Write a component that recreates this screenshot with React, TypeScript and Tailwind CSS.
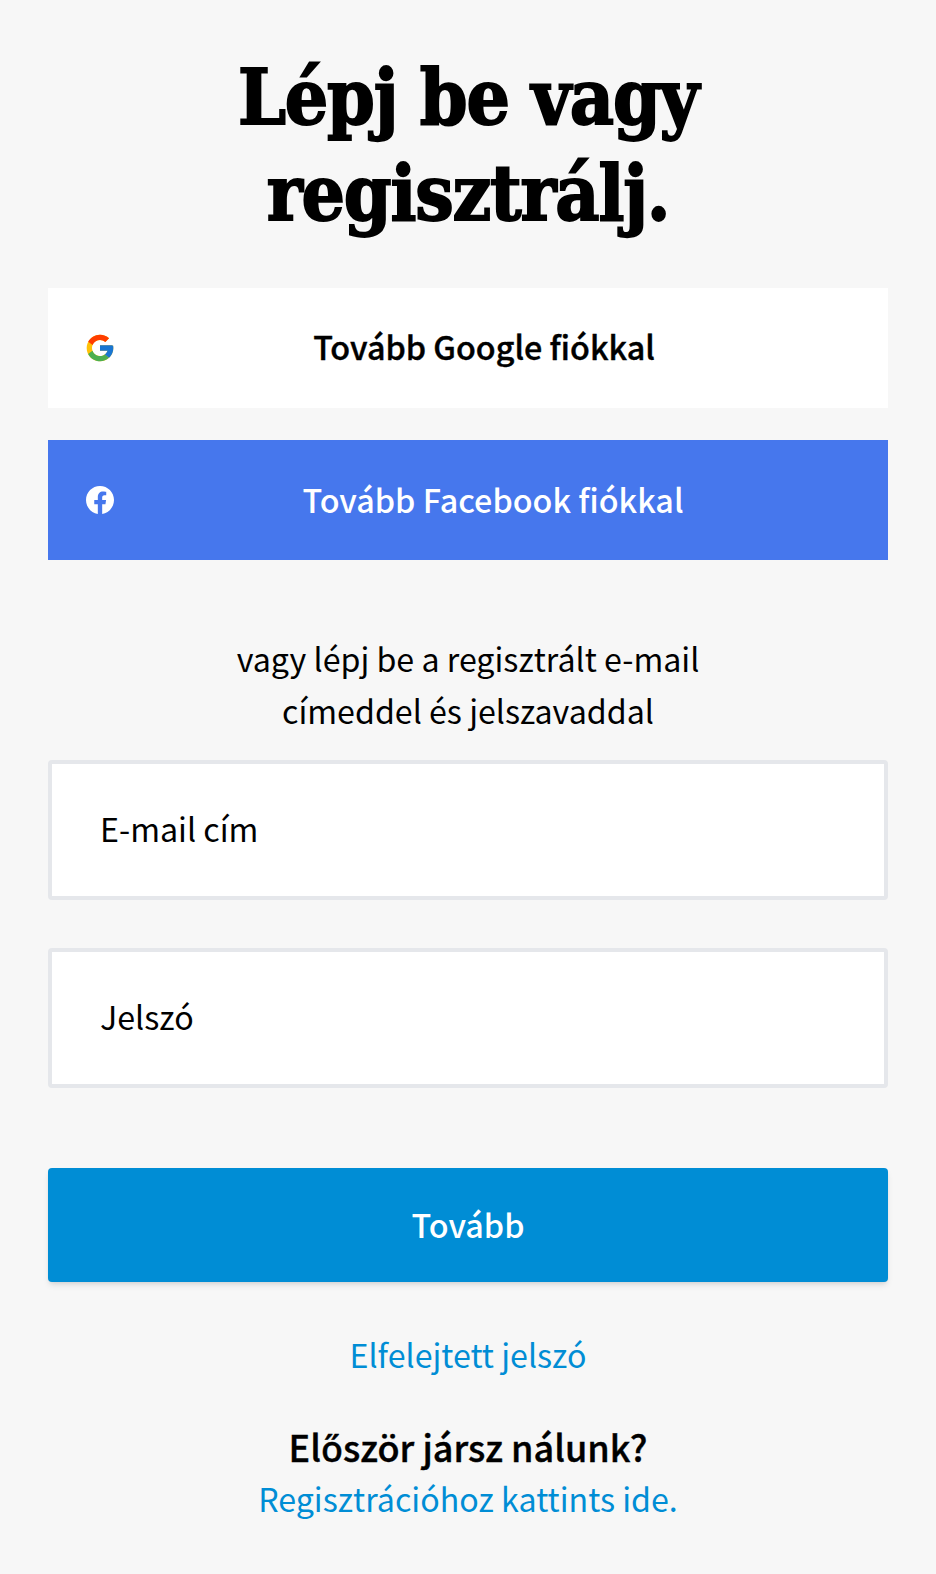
const sans = "font-['Noto_Sans_CJK_JP','Noto_Sans',sans-serif]";
export default function App() {
  return (
    <div className={`min-h-[1574px] bg-[#f7f7f7] px-12 pt-[50px] text-black ${sans}`}>
      <h1 className="text-center font-['DejaVu_Serif_Condensed','DejaVu_Serif',serif] text-[76px] leading-[96px] font-bold tracking-[-1.2px] [-webkit-text-stroke:1.8px_black]">Lépj be vagy<br />regisztrálj.</h1>
      <div className="mt-[46px] flex h-[120px] items-center bg-white pl-[36px]">
        <svg width="32" height="32" viewBox="0 0 48 48"><path fill="#FFC107" d="M43.611,20.083H42V20H24v8h11.303c-1.649,4.657-6.08,8-11.303,8c-6.627,0-12-5.373-12-12c0-6.627,5.373-12,12-12c3.059,0,5.842,1.154,7.961,3.039l5.657-5.657C34.046,6.053,29.268,4,24,4C12.955,4,4,12.955,4,24c0,11.045,8.955,20,20,20c11.045,0,20-8.955,20-20C44,22.659,43.862,21.35,43.611,20.083z"/><path fill="#FF3D00" d="M6.306,14.691l6.571,4.819C14.655,15.108,18.961,12,24,12c3.059,0,5.842,1.154,7.961,3.039l5.657-5.657C34.046,6.053,29.268,4,24,4C16.318,4,9.656,8.337,6.306,14.691z"/><path fill="#4CAF50" d="M24,44c5.166,0,9.86-1.977,13.409-5.192l-6.19-5.238C29.211,35.091,26.715,36,24,36c-5.202,0-9.619-3.317-11.283-7.946l-6.522,5.025C9.505,39.556,16.227,44,24,44z"/><path fill="#1976D2" d="M43.611,20.083H42V20H24v8h11.303c-0.792,2.237-2.231,4.166-4.087,5.571c0.001-0.001,0.002-0.001,0.003-0.002l6.19,5.238C36.971,39.205,44,34,44,24C44,22.659,43.862,21.35,43.611,20.083z"/></svg>
        <span className="flex-1 pr-[36px] pb-1 text-center text-[32.3px] leading-[46px] font-medium [-webkit-text-stroke:0.4px_black]">Tovább Google fiókkal</span>
      </div>
      <div className="mt-8 flex h-[120px] items-center bg-[#4677ed] pl-[38px] text-white">
        <svg width="28" height="28" viewBox="0 0 24 24"><path fill="#fff" d="M24 12.070C24 5.400 18.630 0 12 0S0 5.400 0 12.070c0 6.030 4.390 11.020 10.130 11.930v-8.440H7.080v-3.490h3.050V9.410c0-3.030 1.790-4.700 4.530-4.700 1.310 0 2.680.24 2.680.24v2.970h-1.510c-1.490 0-1.960.93-1.960 1.880v2.270h3.330l-.53 3.490h-2.800V24C19.610 23.090 24 18.100 24 12.070z"/></svg>
        <span className="flex-1 pr-[16px] pb-[3px] text-center text-[32.3px] leading-[46px] font-medium">Tovább Facebook fiókkal</span>
      </div>
      <p className="mt-[72px] text-center text-[32.2px] leading-[52px]">vagy lépj be a regisztrált e-mail<br />címeddel és jelszavaddal</p>
      <div className="mt-[24px] flex h-[140px] items-center rounded border-4 border-[#e5e7eb] bg-white pb-1 pl-[48px] text-[32.2px] leading-[46px]">E-mail cím</div>
      <div className="mt-12 flex h-[140px] items-center rounded border-4 border-[#e5e7eb] bg-white pb-1 pl-[48px] text-[32.2px] leading-[46px]">Jelszó</div>
      <button className="mt-[80px] flex h-[114px] w-full items-center justify-center rounded bg-[#008dd5] pb-[3px] text-[32.3px] leading-[46px] font-medium text-white shadow-md">Tovább</button>
      <p className="mt-[46px] text-center text-[32.2px] leading-[52px] text-[#008dd5]">Elfelejtett jelszó</p>
      <p className="mt-[40px] text-center text-[36px] leading-[52px] font-medium [-webkit-text-stroke:0.4px_black]">Először jársz nálunk?</p>
      <p className="text-center text-[32.2px] leading-[52px] text-[#008dd5]">Regisztrációhoz kattints ide.</p>
    </div>
  );
}
